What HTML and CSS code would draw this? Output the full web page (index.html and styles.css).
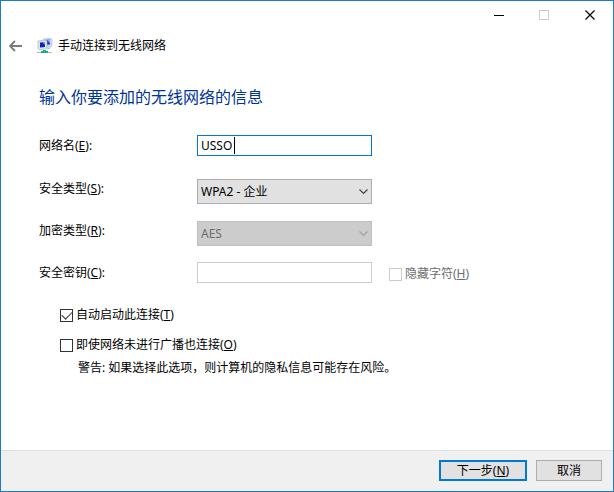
FILE: index.html
```html
<!DOCTYPE html>
<html lang="zh-CN">
<head>
  <meta charset="UTF-8">
  <meta name="viewport" content="width=device-width, initial-scale=1.0">
  <title>手动连接到无线网络</title>
  <link rel="stylesheet" href="styles.css">
</head>
<body>

<div class="window">
  <div class="titlebar">
    <button class="caption" type="button" aria-label="最小化">
      <svg width="11" height="11"><path d="M1 5.5h10" stroke="#000"/></svg>
    </button>
    <button class="caption" type="button" aria-label="最大化" disabled>
      <svg width="11" height="11"><rect x=".5" y=".5" width="9" height="9" fill="none" stroke="#ccc"/></svg>
    </button>
    <button class="caption" type="button" aria-label="关闭">
      <svg width="11" height="11"><path d="M.5 .5l9 9M9.5 .5l-9 9" stroke="#000" stroke-width="1.2"/></svg>
    </button>
  </div>

  <header class="header">
    <button class="back" type="button" aria-label="返回">
      <svg width="13" height="12"><path d="M1 6h12M6 1L1 6l5 5" fill="none" stroke="#7b7b7b" stroke-width="1.8"/></svg>
    </button>
    <svg class="network-icon" width="16" height="16">
      <path d="M6 1l8-1 1 1v7l-1 1-7 1z" fill="#d3dcea" stroke="#b4c0d2" stroke-width=".6"/>
      <path d="M8 2l5-.5v5L8 7z" fill="#1c3fd0"/>
      <path d="M10 2l3-.5v3.500z" fill="#8fb4f5"/>
      <path d="M1 3l8-1 1 1v7l-1 1-7 .5-1-1z" fill="#dfe6f0" stroke="#9aa8be" stroke-width=".6"/>
      <path d="M3 4.500L8 4v5l-5 .5z" fill="#0b22b8"/>
      <path d="M5 4.300L8 4v3z" fill="#6f98ef"/>
      <path d="M10 11l3-1" fill="none" stroke="#b4bccb"/>
      <path d="M0 14.500h15" stroke="#b3b9bd"/>
      <path d="M6 12h3v1h2v2H4v-2h2z" fill="#17b877"/>
    </svg>
    <span>手动连接到无线网络</span>
  </header>

  <main class="content">
    <h1>输入你要添加的无线网络的信息</h1>

    <div class="fields">
      <label for="name">网络名(<u>E</u>):</label>
      <div class="control">
        <input class="text" id="name" type="text" value="USSO">
        <span class="caret"></span>
      </div>

      <label for="security">安全类型(<u>S</u>):</label>
      <div class="control">
        <select id="security"><option>WPA2 - 企业</option></select>
        <svg class="chevron" width="9" height="6"><path d="M.5 .5l4 4 4-4" fill="none" stroke="#444" stroke-width="1.2"/></svg>
      </div>

      <label for="encryption">加密类型(<u>R</u>):</label>
      <div class="control">
        <select id="encryption" disabled><option>AES</option></select>
        <svg class="chevron" width="9" height="6"><path d="M.5 .5l4 4 4-4" fill="none" stroke="#a0a0a0" stroke-width="1.2"/></svg>
      </div>

      <label for="key">安全密钥(<u>C</u>):</label>
      <div class="control">
        <input class="text" id="key" type="text" disabled>
      </div>
      <label class="check hide-chars"><input type="checkbox" disabled>隐藏字符(<u>H</u>)</label>
    </div>

    <div class="options">
      <label class="check"><input type="checkbox" checked>自动启动此连接(<u>T</u>)</label>
      <label class="check"><input type="checkbox">即使网络未进行广播也连接(<u>O</u>)</label>
      <p class="warning">警告: 如果选择此选项，则计算机的隐私信息可能存在风险。</p>
    </div>
  </main>

  <footer class="footer">
    <button class="button primary" type="button">下一步(<u>N</u>)</button>
    <button class="button" type="button">取消</button>
  </footer>
</div>

</body>
</html>
```
FILE: styles.css
```css
* {
  box-sizing: border-box;
}

body {
  margin: 0;
}

body,
button,
input,
select {
  font-family: "Noto Sans", "Noto Sans CJK SC", sans-serif;
  font-size: 12px;
  color: #000;
}

.window {
  display: flex;
  flex-direction: column;
  min-height: 100vh;
  border: 1px solid #1a7ad0;
  background: #fff;
}

.titlebar {
  display: flex;
  justify-content: flex-end;
}

.caption {
  display: flex;
  align-items: center;
  justify-content: center;
  width: 46px;
  height: 28px;
  padding: 0;
  border: none;
  background: none;
}

.header {
  display: flex;
  align-items: center;
  height: 34px;
  padding-left: 8px;
  line-height: 22px;
}

.back {
  display: flex;
  padding: 0;
  border: none;
  background: none;
}

.network-icon {
  margin: 0 5px 0 15px;
}

.content {
  flex: 1;
  padding: 20px 38px;
}

h1 {
  margin: 0 0 24px;
  font-size: 16px;
  font-weight: normal;
  line-height: 28px;
  color: #003399;
}

.fields {
  display: grid;
  grid-template-columns: 158px 175px auto;
  grid-template-rows: 43px;
  grid-auto-rows: 42px;
  justify-content: start;
  align-items: start;
  line-height: 22px;
}

.fields > label:not(.check) {
  grid-column: 1;
}

.control {
  position: relative;
  grid-column: 2;
}

.text,
select {
  display: block;
  width: 100%;
  margin: 0;
  border-radius: 0;
}

.text {
  height: 21px;
  padding: 0 3px;
  border: 1px solid #0078d7;
  background: #fff;
}

.text:disabled {
  border-color: #ccc;
}

.caret {
  position: absolute;
  top: 2px;
  left: 37px;
  width: 1px;
  height: 17px;
  background: #000;
}

select {
  appearance: none;
  height: 25px;
  margin-top: 1px;
  padding: 0 20px 0 3px;
  border: 1px solid #adadad;
  background: #e1e1e1;
}

select:disabled {
  border-color: #bfbfbf;
  background: #ccc;
  color: #6d6d6d;
  opacity: 1;
}

.chevron {
  position: absolute;
  top: 11px;
  right: 4px;
  pointer-events: none;
}

.check {
  display: flex;
  align-items: center;
  line-height: 22px;
}

.check input {
  appearance: none;
  width: 13px;
  height: 13px;
  margin: 0 3px 0 0;
  border: 1px solid #333;
  background: #fff;
}

.check input:checked::before {
  content: "";
  display: block;
  width: 9px;
  height: 5px;
  margin: 2px 1px;
  border: solid #333;
  border-width: 0 0 1px 1px;
  transform: translateY(-1px) rotate(-45deg);
}

.check input:disabled {
  border-color: #ccc;
}

.hide-chars {
  grid-column: 3;
  padding: 1px 0 0 17px;
  color: #6d6d6d;
}

.options {
  display: flex;
  flex-direction: column;
  align-items: flex-start;
  gap: 8px;
  padding: 0 0 0 21px;
}

.warning {
  margin: -7px 0 0 18px;
  line-height: 22px;
}

.footer {
  display: flex;
  justify-content: flex-end;
  gap: 9px;
  padding: 9px 11px 10px;
  border-top: 1px solid #dfdfdf;
  background: #f0f0f0;
}

.button {
  min-width: 66px;
  height: 21px;
  padding: 0;
  border: 1px solid #adadad;
  background: #e1e1e1;
  line-height: 17px;
}

.primary {
  min-width: 88px;
  border: 2px solid #0078d7;
}
```
